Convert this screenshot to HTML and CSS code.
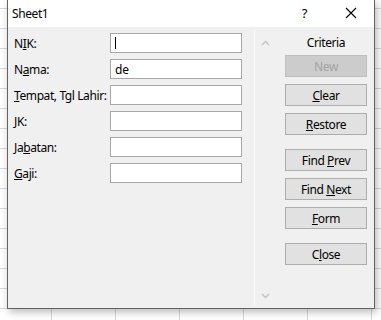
FILE: index.html
```html
<!DOCTYPE html>
<html lang="en">
<head>
  <meta charset="UTF-8" />
  <title>Sheet1</title>
  <link rel="stylesheet" href="styles.css">
</head>
<body>
<div class="dialog">
  <div class="titlebar">
    <span class="title">Sheet1</span>
    <span class="help">?</span>
    <svg class="close-x" width="12" height="12" viewBox="0 0 12 12">
      <path d="M1 1 L11 11 M11 1 L1 11" stroke="#000" stroke-width="1.1" fill="none"/>
    </svg>
  </div>

  <div class="content">
    <div class="fields">
      <div class="row"><label>N<u>I</u>K:</label><input type="text" class="focused" value=""><span class="caret"></span></div>
      <div class="row"><label>N<u>a</u>ma:</label><input type="text" value="de"></div>
      <div class="row"><label><u>T</u>empat, Tgl Lahir:</label><input type="text"></div>
      <div class="row"><label><u>J</u>K:</label><input type="text"></div>
      <div class="row"><label>Ja<u>b</u>atan:</label><input type="text"></div>
      <div class="row"><label><u>G</u>aji:</label><input type="text"></div>
    </div>

    <div class="scrollbar">
      <svg width="9" height="6" viewBox="0 0 9 6"><path d="M1 5 L4.5 1.5 L8 5" stroke="#c2c2c2" stroke-width="1.4" fill="none"/></svg>
      <svg width="9" height="6" viewBox="0 0 9 6"><path d="M1 1 L4.5 4.5 L8 1" stroke="#c2c2c2" stroke-width="1.4" fill="none"/></svg>
    </div>

    <div class="buttons">
      <div class="criteria">Criteria</div>
      <button class="btn" disabled>Ne<u>w</u></button>
      <button class="btn"><u>C</u>lear</button>
      <button class="btn"><u>R</u>estore</button>
      <button class="btn spaced">Find <u>P</u>rev</button>
      <button class="btn">Find <u>N</u>ext</button>
      <button class="btn"><u>F</u>orm</button>
      <button class="btn spaced">C<u>l</u>ose</button>
    </div>
  </div>
</div>
</body>
</html>
```

FILE: styles.css
```css
body {
  margin: 0;
  width: 381px;
  height: 320px;
  overflow: hidden;
  font-family: "Noto Sans", "Segoe UI", sans-serif;
  font-size: 12px;
  letter-spacing: -0.4px;
  background-color: #fff;
  background-image:
    repeating-linear-gradient(to right, transparent 0, transparent 51px, #d8d8d8 51px, #d8d8d8 52px, transparent 52px, transparent 64px),
    repeating-linear-gradient(to bottom, transparent 0, transparent 8px, #d8d8d8 8px, #d8d8d8 9px, transparent 9px, transparent 20px);
}

.dialog {
  margin-left: 7px;
  width: 366px;
  height: 308px;
  border: 1px solid #626262;
  border-top: none;
  box-shadow: 2px 3px 8px rgba(0, 0, 0, 0.28);
  display: flex;
  flex-direction: column;
}

.titlebar {
  height: 26px;
  background: #fff;
  display: flex;
  align-items: center;
  padding: 0 0 1px 4px;
}
.title {
  flex: 1;
  color: #000;
}
.help {
  font-size: 13px;
  margin-right: 38px;
}
.close-x {
  margin-right: 17px;
}

.content {
  flex: 1;
  background: #f0f0f0;
  display: flex;
  padding: 6px 6px 3px 6px;
}

.fields {
  width: 234px;
}
.row {
  display: flex;
  align-items: center;
  height: 20px;
  margin-bottom: 6px;
  position: relative;
}
.row label {
  width: 96px;
  color: #000;
  white-space: nowrap;
}
.row input {
  box-sizing: border-box;
  width: 132px;
  height: 20px;
  border: 1px solid #a8a8a8;
  background: #fff;
  font-family: inherit;
  font-size: 12px;
  letter-spacing: -0.2px;
  padding: 0 0 0 4px;
  outline: none;
}
.caret {
  position: absolute;
  left: 101px;
  top: 4px;
  width: 1px;
  height: 12px;
  background: #000;
}

.scrollbar {
  width: 20px;
  margin: -3px 0 0 6px;
  border-left: 1px solid #fbfbfb;
  display: flex;
  flex-direction: column;
  justify-content: space-between;
  align-items: center;
  padding: 10px 0 6px;
}

.buttons {
  width: 82px;
  margin-left: 10px;
  display: flex;
  flex-direction: column;
}
.criteria {
  text-align: center;
  height: 22px;
  line-height: 19px;
}
.btn {
  box-sizing: border-box;
  width: 82px;
  height: 22px;
  margin-bottom: 7px;
  border: 1px solid #adadad;
  background: #e1e1e1;
  font-family: inherit;
  font-size: 12px;
  letter-spacing: -0.4px;
  color: #000;
  padding: 0;
}
.btn:disabled {
  background: #cccccc;
  border-color: #bfbfbf;
  color: #a3a3a3;
}
.btn:disabled u {
  text-decoration: none;
}
.spaced {
  margin-top: 7px;
}
```
